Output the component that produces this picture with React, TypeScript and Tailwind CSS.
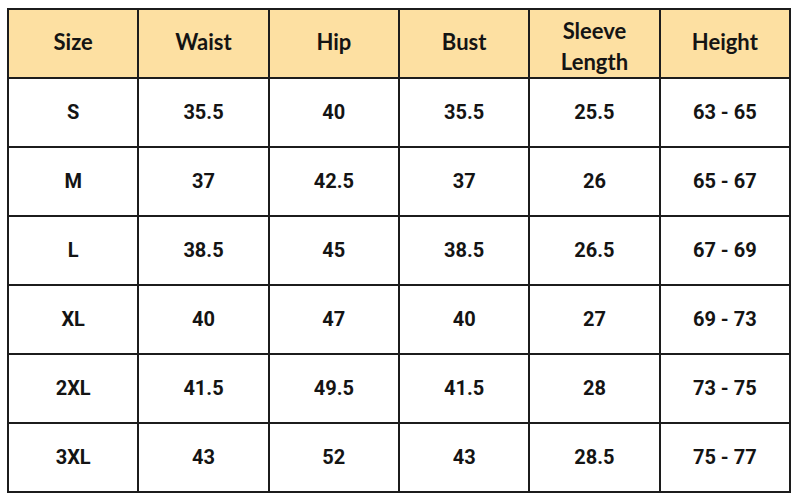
import React from "react";

const headers = ["Size", "Waist", "Hip", "Bust", "Sleeve\nLength", "Height"];
const rows = [
  ["S", "35.5", "40", "35.5", "25.5", "63 - 65"],
  ["M", "37", "42.5", "37", "26", "65 - 67"],
  ["L", "38.5", "45", "38.5", "26.5", "67 - 69"],
  ["XL", "40", "47", "40", "27", "69 - 73"],
  ["2XL", "41.5", "49.5", "41.5", "28", "73 - 75"],
  ["3XL", "43", "52", "43", "28.5", "75 - 77"],
];

export default function App() {
  return (
    <div className="w-[800px] h-[500px] bg-white pt-[8px] pl-[7px]" style={{ fontFamily: "Roboto, 'Liberation Sans', sans-serif" }}>
      <table className="w-[784px] h-[483px] border-collapse border-2 border-[#1c1c1c] table-fixed text-[#141414]">
        <thead>
          <tr className="bg-[#fde0a2] h-[69px]">
            {headers.map((h) => (
              <th
                key={h}
                className={
                  h.includes("\n")
                    ? "border-2 border-[#1c1c1c] text-[22px] font-bold leading-[31px] whitespace-pre-line text-center align-middle pt-[5px]"
                    : "border-2 border-[#1c1c1c] text-[22px] font-bold leading-[31px] whitespace-pre-line text-center align-middle pb-[4px]"
                }
                style={{ fontFamily: "Lato, 'Liberation Sans', sans-serif" }}
              >
                {h}
              </th>
            ))}
          </tr>
        </thead>
        <tbody>
          {rows.map((r) => (
            <tr key={r[0]} className="h-[69px]">
              {r.map((c, i) => (
                <td key={i} className="border-2 border-[#1c1c1c] text-[20px] font-bold text-center align-middle pb-[2px]">
                  {c}
                </td>
              ))}
            </tr>
          ))}
        </tbody>
      </table>
    </div>
  );
}
